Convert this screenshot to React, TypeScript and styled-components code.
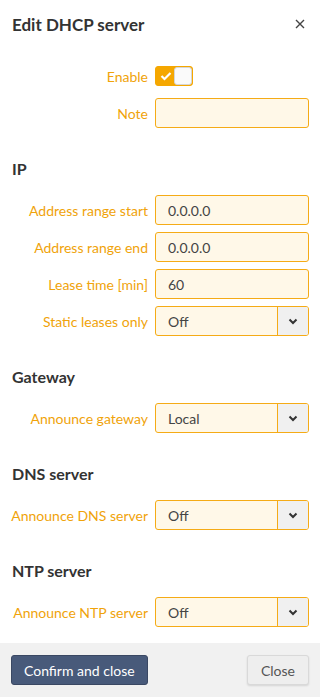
import styled, { createGlobalStyle } from 'styled-components';

const GlobalStyle = createGlobalStyle`
  html, body {
    margin: 0;
    padding: 0;
    background: #fff;
  }
  body {
    font-family: Lato, 'Open Sans', sans-serif;
    font-size: 14px;
    color: #333;
  }
`;

const Dialog = styled.div`
  width: 320px;
  height: 697px;
  display: flex;
  flex-direction: column;
  background: #fff;
`;

const Header = styled.div`
  height: 48px;
  display: flex;
  align-items: center;
  justify-content: space-between;
  padding: 0 14px 0 12px;
  box-sizing: border-box;

  h1 {
    margin: 0;
    font-size: 17px;
    font-weight: 700;
    color: #333;
  }
`;

const CloseX = styled.button`
  border: 0;
  background: none;
  padding: 0;
  width: 12px;
  height: 12px;
  display: flex;
  align-items: center;
  justify-content: center;
  color: #444;
  cursor: pointer;
`;

const Body = styled.div`
  flex: 1;
  padding: 13px 11px 0 11px;
`;

const Section = styled.div`
  margin-top: 31px;

  h2 {
    margin: 0 0 16px 1px;
    font-size: 16px;
    line-height: 20px;
    font-weight: 700;
    color: #333;
  }
`;

const Row = styled.div`
  display: grid;
  grid-template-columns: 137px 154px;
  column-gap: 7px;
  align-items: center;
  height: 30px;
  & + & {
    margin-top: 7px;
  }
`;

const Label = styled.label`
  text-align: right;
  color: #f0a30a;
  font-size: 14px;
  white-space: nowrap;
`;

const Input = styled.input`
  box-sizing: border-box;
  width: 154px;
  height: 30px;
  border: 1px solid #f5ab16;
  border-radius: 3px;
  background: #fff8e8;
  padding: 0 12px;
  font-family: inherit;
  font-size: 14px;
  color: #444;
  outline: none;
`;

const SelectBox = styled.div`
  box-sizing: border-box;
  width: 154px;
  height: 30px;
  border: 1px solid #f5ab16;
  border-radius: 3px;
  background: #fff8e8;
  display: flex;
  overflow: hidden;
`;

const SelectValue = styled.div`
  flex: 1;
  display: flex;
  align-items: center;
  padding: 0 12px;
  color: #444;
  font-size: 14px;
`;

const SelectArrow = styled.div`
  width: 30px;
  border-left: 1px solid #f5ab16;
  background: #f0f0f0;
  display: flex;
  align-items: center;
  justify-content: center;
  color: #333;
`;

const Toggle = styled.div`
  box-sizing: border-box;
  width: 38px;
  height: 20px;
  border-radius: 3px;
  background: #f5a700;
  border: 1px solid #f5a700;
  display: flex;
  align-items: center;
  justify-content: space-between;
  padding-left: 4px;
`;

const Knob = styled.div`
  box-sizing: border-box;
  width: 18px;
  height: 18px;
  background: #fafafa;
  border: 1px solid #d6d6d6;
  border-radius: 3px;
`;

const Footer = styled.div`
  height: 54px;
  background: #f1f1f1;
  display: flex;
  align-items: center;
  justify-content: space-between;
  padding: 0 11px;
  box-sizing: border-box;
`;

const Button = styled.button<{ $primary?: boolean }>`
  height: 30px;
  box-sizing: border-box;
  border-radius: 3px;
  font-family: inherit;
  font-size: 14px;
  padding: 0 ${(p) => (p.$primary ? '12px' : '13px')};
  border: 1px solid ${(p) => (p.$primary ? '#3a4863' : '#d9d9d9')};
  background: ${(p) => (p.$primary ? '#485a7a' : '#eeeeee')};
  color: ${(p) => (p.$primary ? '#fff' : '#555')};
  box-shadow: ${(p) => (p.$primary ? 'none' : '0 1px 2px rgba(0,0,0,0.12)')};
`;

const Chevron = () => (
  <svg width="10" height="7" viewBox="0 0 10 7">
    <path d="M1.5 1.5 L5 5 L8.5 1.5" fill="none" stroke="#333" strokeWidth="2" />
  </svg>
);

const Select = ({ value }: { value: string }) => (
  <SelectBox>
    <SelectValue>{value}</SelectValue>
    <SelectArrow>
      <Chevron />
    </SelectArrow>
  </SelectBox>
);

export default function App() {
  return (
    <>
      <GlobalStyle />
      <Dialog>
        <Header>
          <h1>Edit DHCP server</h1>
          <CloseX aria-label="Close">
            <svg width="10" height="10" viewBox="0 0 10 10">
              <path d="M1 1 L9 9 M9 1 L1 9" stroke="#444" strokeWidth="1.4" />
            </svg>
          </CloseX>
        </Header>
        <Body>
          <Row>
            <Label>Enable</Label>
            <Toggle>
              <svg width="12" height="10" viewBox="0 0 12 10">
                <path d="M1.5 5 L4.5 8 L10.5 2" fill="none" stroke="#fff" strokeWidth="2.2" />
              </svg>
              <Knob />
            </Toggle>
          </Row>
          <Row>
            <Label>Note</Label>
            <Input defaultValue="" />
          </Row>

          <Section>
            <h2>IP</h2>
            <Row>
              <Label>Address range start</Label>
              <Input defaultValue="0.0.0.0" />
            </Row>
            <Row>
              <Label>Address range end</Label>
              <Input defaultValue="0.0.0.0" />
            </Row>
            <Row>
              <Label>Lease time [min]</Label>
              <Input defaultValue="60" />
            </Row>
            <Row>
              <Label>Static leases only</Label>
              <Select value="Off" />
            </Row>
          </Section>

          <Section>
            <h2>Gateway</h2>
            <Row>
              <Label>Announce gateway</Label>
              <Select value="Local" />
            </Row>
          </Section>

          <Section>
            <h2>DNS server</h2>
            <Row>
              <Label>Announce DNS server</Label>
              <Select value="Off" />
            </Row>
          </Section>

          <Section>
            <h2>NTP server</h2>
            <Row>
              <Label>Announce NTP server</Label>
              <Select value="Off" />
            </Row>
          </Section>
        </Body>
        <Footer>
          <Button $primary>Confirm and close</Button>
          <Button>Close</Button>
        </Footer>
      </Dialog>
    </>
  );
}
